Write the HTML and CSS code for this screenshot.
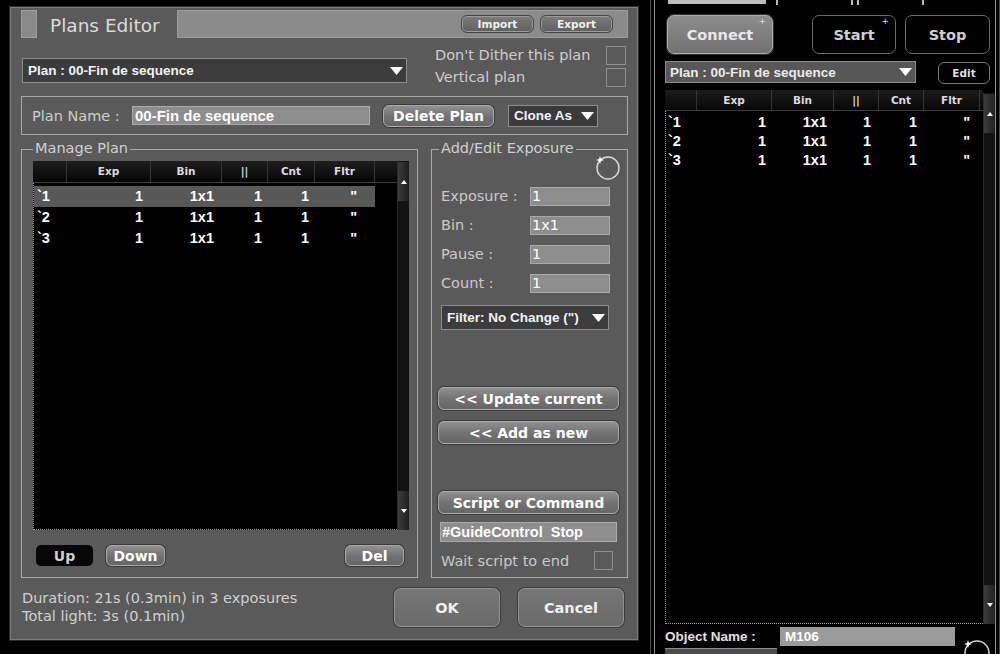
FILE: index.html
```html
<!DOCTYPE html>
<html>
<head>
<meta charset="utf-8">
<title>Plans Editor</title>
<link rel="stylesheet" href="styles.css">
</head>
<body>
<div class="dlg">
  <div class="titlerow">
    <div class="tsq"></div>
    <div class="ttl">Plans Editor</div>
    <div class="tbar">
      <button class="pill">Import</button>
      <button class="pill">Export</button>
    </div>
  </div>

  <div class="row2">
    <div class="combo plansel"><span>Plan : 00-Fin de sequence</span><svg class="arr" viewBox="0 0 13 8"><polygon points="0,0 13,0 6.5,8"/></svg></div>
    <div class="checks">
      <span class="clabel">Don't Dither this plan</span><span class="chk"></span>
      <span class="clabel">Vertical plan</span><span class="chk"></span>
    </div>
  </div>

  <div class="namebox">
    <span class="nlabel">Plan Name :</span>
    <div class="field namefield">00-Fin de sequence</div>
    <button class="btn delplan">Delete Plan</button>
    <div class="combo clone"><span>Clone As</span><svg class="arr" viewBox="0 0 13 8"><polygon points="0,0 13,0 6.5,8"/></svg></div>
  </div>

  <div class="groups">
    <div class="group manage">
      <span class="legend">Manage Plan</span>
      <div class="list">
        <div class="lmain">
          <div class="lhead">
            <span></span><span>Exp</span><span>Bin</span><span>||</span><span>Cnt</span><span>Fltr</span><span></span>
          </div>
          <div class="lbody">
            <div class="lrow sel"><span>`1</span><span>1</span><span>1x1</span><span>1</span><span>1</span><span>&quot;</span></div>
            <div class="lrow"><span>`2</span><span>1</span><span>1x1</span><span>1</span><span>1</span><span>&quot;</span></div>
            <div class="lrow"><span>`3</span><span>1</span><span>1x1</span><span>1</span><span>1</span><span>&quot;</span></div>
          </div>
        </div>
        <div class="sbar">
          <div class="sthumb"><svg viewBox="0 0 6 4"><polygon points="0,4 6,4 3,0"/></svg></div>
          <div class="sthumb"><svg viewBox="0 0 6 4"><polygon points="0,0 6,0 3,4"/></svg></div>
        </div>
      </div>
      <div class="mbtns">
        <button class="upbtn">Up</button>
        <button class="btn downbtn">Down</button>
        <button class="btn delbtn">Del</button>
      </div>
    </div>

    <div class="group addedit">
      <span class="legend">Add/Edit Exposure</span>
      <svg class="ring" viewBox="0 0 26 26">
        <circle cx="13" cy="13" r="11" fill="none" stroke="#d6d6d6" stroke-width="1.5"/>
        <path d="M5 1 L6 4 L9 5 L6 6 L5 9 L4 6 L1 5 L4 4 Z" fill="#fff"/>
      </svg>
      <div class="form">
        <span>Exposure :</span><div class="field inp">1</div>
        <span>Bin :</span><div class="field inp">1x1</div>
        <span>Pause :</span><div class="field inp">1</div>
        <span>Count :</span><div class="field inp">1</div>
      </div>
      <div class="combo filter"><span>Filter: No Change (&quot;)</span><svg class="arr" viewBox="0 0 13 8"><polygon points="0,0 13,0 6.5,8"/></svg></div>
      <button class="btn wide upd">&lt;&lt; Update current</button>
      <button class="btn wide addnew">&lt;&lt; Add as new</button>
      <button class="btn wide script">Script or Command</button>
      <div class="field guide">#GuideControl&nbsp; Stop</div>
      <div class="waitrow"><span>Wait script to end</span><span class="chk"></span></div>
    </div>
  </div>

  <div class="footer">
    <div class="ftext">Duration: 21s (0.3min) in 3 exposures<br>Total light: 3s (0.1min)</div>
    <button class="bigbtn okb">OK</button>
    <button class="bigbtn cancelb">Cancel</button>
  </div>
</div>

<div class="rp">
  <div class="topstrip">
    <span class="tsbar"></span><span class="tick t1"></span><span class="tick t2"></span><span class="tick t3"></span><span class="tick t4"></span>
  </div>
  <div class="rbtns">
    <button class="rbtn connect">Connect<span class="plus">+</span></button>
    <button class="rbtn dark start">Start<span class="plus">+</span></button>
    <button class="rbtn dark stop">Stop</button>
  </div>
  <div class="rplanrow">
    <div class="combo rplan"><span>Plan : 00-Fin de sequence</span><svg class="arr" viewBox="0 0 13 8"><polygon points="0,0 13,0 6.5,8"/></svg></div>
    <button class="editbtn">Edit</button>
  </div>
  <div class="rlist">
    <div class="rmain">
      <div class="rhead">
        <span></span><span>Exp</span><span>Bin</span><span>||</span><span>Cnt</span><span>Fltr</span><span></span>
      </div>
      <div class="rbody">
        <div class="rrow"><span>`1</span><span>1</span><span>1x1</span><span>1</span><span>1</span><span>&quot;</span></div>
        <div class="rrow"><span>`2</span><span>1</span><span>1x1</span><span>1</span><span>1</span><span>&quot;</span></div>
        <div class="rrow"><span>`3</span><span>1</span><span>1x1</span><span>1</span><span>1</span><span>&quot;</span></div>
      </div>
    </div>
    <div class="sbar rsbar">
      <div class="sthumb"><svg viewBox="0 0 6 4"><polygon points="0,4 6,4 3,0"/></svg></div>
      <div class="sthumb"><svg viewBox="0 0 6 4"><polygon points="0,0 6,0 3,4"/></svg></div>
    </div>
  </div>
  <div class="objrow">
    <span class="objlabel">Object Name :</span>
    <div class="objfield">M106</div>
    <svg class="ring rring" viewBox="0 0 28 28">
      <circle cx="14" cy="14" r="12" fill="none" stroke="#d6d6d6" stroke-width="1.5"/>
      <path d="M5 1 L6 4 L9 5 L6 6 L5 9 L4 6 L1 5 L4 4 Z" fill="#fff"/>
    </svg>
  </div>
  <div class="cutbar"></div>
</div>
</body>
</html>
```

FILE: styles.css
```css
* { box-sizing: border-box; }
html, body { margin: 0; padding: 0; }
body {
  background: #000;
  width: 1000px;
  height: 654px;
  overflow: hidden;
  display: flex;
  align-items: flex-start;
  font-family: "DejaVu Sans", Verdana, sans-serif;
  font-size: 14.5px;
  color: #d2d2d2;
}
button { font: inherit; color: inherit; padding: 0; margin: 0; }

/* ---------- dialog ---------- */
.dlg {
  margin: 7px 0 0 10px;
  width: 628px;
  height: 633px;
  border: 1px solid #7c7c7c;
  box-shadow: 0 0 0 1px #2b2b2b;
  background: #5a5a5a;
  padding: 2px 9px 0 10px;
}
.titlerow { display: flex; height: 28px; align-items: center; }
.tsq { width: 16px; height: 28px; background: #8a8a8a; border: 1px solid #9d9d9d; }
.ttl {
  width: 140px;
  height: 28px;
  padding: 3px 0 0 13px;
  font-size: 18.5px;
  line-height: 25px;
  color: #dadada;
  white-space: nowrap;
}
.tbar {
  flex: 1;
  height: 28px;
  background: #8b8b8b;
  border: 1px solid #9b9b9b;
  display: flex;
  justify-content: flex-end;
  align-items: center;
  gap: 6px;
  padding-right: 14px;
}
.pill {
  width: 73px;
  height: 18px;
  border-radius: 6px;
  background: linear-gradient(#7c7c7c, #5f5f5f);
  border: 1px solid #444;
  box-shadow: inset 0 0 0 1px #9c9c9c;
  color: #f0f0f0;
  font-weight: bold;
  font-size: 10.5px;
  line-height: 15px;
  text-align: center;
}

.row2 { display: flex; height: 58px; align-items: flex-start; }
.combo {
  display: flex;
  align-items: center;
  justify-content: space-between;
  background: #3c3c3c;
  border: 1px solid #8c8c8c;
  font-family: "Liberation Sans", Arial, sans-serif;
  font-weight: bold;
  font-size: 13.5px;
  color: #f2f2f2;
  white-space: nowrap;
}
.arr { width: 13px; height: 8px; fill: #fff; flex: none; }
.plansel { margin: 20px 0 0 1px; width: 385px; height: 25px; padding: 0 3px 0 5px; }
.checks {
  margin: 8px 2px 0 auto;
  display: grid;
  grid-template-columns: 171px 20px;
  row-gap: 3px;
  align-items: center;
}
.clabel { line-height: 19px; color: #cdcdcd; white-space: nowrap; }
.chk { display: block; width: 20px; height: 19px; border: 1px solid #8f8f8f; background: #5a5a5a; }

.namebox {
  height: 39px;
  border: 1px solid #a8a8a8;
  display: flex;
  align-items: center;
  padding-left: 10px;
}
.nlabel { width: 100px; color: #cdcdcd; white-space: nowrap; }
.field { background: #8d8d8d; border: 1px solid #a9a9a9; color: #fff; white-space: nowrap; }
.namefield {
  width: 238px;
  height: 19px;
  font-family: "Liberation Sans", Arial, sans-serif;
  font-weight: bold;
  font-size: 15px;
  line-height: 17px;
  padding-left: 2px;
}
.btn {
  border: 1px solid #ababab;
  border-radius: 6px;
  background: linear-gradient(#909090, #737373 50%, #666);
  box-shadow: 0 0 0 1px #3a3a3a;
  color: #fff;
  font-weight: bold;
  font-size: 14px;
  line-height: 1;
  text-align: center;
  white-space: nowrap;
}
.delplan { margin-left: 13px; width: 111px; height: 22px; }
.clone { margin-left: 14px; width: 90px; height: 22px; padding: 0 3px 0 5px; background: #3a3a3a; }

.groups { display: flex; gap: 13px; margin-top: 14px; }
.group {
  height: 429px;
  border: 1px solid #a8a8a8;
  display: flex;
  flex-direction: column;
}
.manage { width: 397px; }
.addedit { width: 197px; }
.legend {
  align-self: flex-start;
  margin: -10px 0 0 11px;
  padding: 0 2px;
  background: #5a5a5a;
  line-height: 17px;
  color: #d0d0d0;
  white-space: nowrap;
}
.addedit .legend { margin-left: 7px; }

.list { margin: 4px 0 0 11px; width: 376px; height: 369px; display: flex; background: #000; }
.lmain { width: 364px; display: flex; flex-direction: column; }
.lhead {
  display: grid;
  grid-template-columns: 34px 84px 71px 46px 47px 60px 22px;
  height: 22px;
  background: linear-gradient(#1e1e1e, #060606);
  border-bottom: 1px solid #3c3c3c;
}
.lhead span, .rhead span {
  border-right: 1px solid #343434;
  text-align: center;
  font-weight: bold;
  font-size: 10.5px;
  line-height: 21px;
  color: #dcdcdc;
}
.lhead span:last-child, .rhead span:last-child { border-right: none; }
.lbody {
  flex: 1;
  border-left: 1px dotted #a0a0a0;
  border-bottom: 1px dotted #a0a0a0;
  padding-top: 3px;
}
.lrow {
  display: grid;
  grid-template-columns: 33px 84px 71px 46px 47px 60px;
  width: 341px;
  height: 21px;
  font-family: "Liberation Sans", Arial, sans-serif;
  font-weight: bold;
  font-size: 14.5px;
  line-height: 21px;
  color: #fff;
}
.lrow.sel { background: #585858; }
.lrow span { text-align: right; }
.lrow span:nth-child(1) { text-align: left; padding-left: 3px; }
.lrow span:nth-child(2) { padding-right: 8px; }
.lrow span:nth-child(3) { padding-right: 8px; }
.lrow span:nth-child(4) { padding-right: 6px; }
.lrow span:nth-child(5) { padding-right: 6px; }
.lrow span:nth-child(6) { padding-right: 18px; }

.sbar {
  width: 12px;
  background: #121212;
  border-left: 1px solid #2c2c2c;
  display: flex;
  flex-direction: column;
  justify-content: space-between;
  padding-top: 1px;
}
.sthumb {
  height: 39px;
  background: linear-gradient(90deg, #3c3c3c, #1f1f1f);
  display: flex;
  align-items: center;
  justify-content: center;
}
.sthumb svg { width: 6px; height: 4px; fill: #fff; }

.mbtns { display: flex; align-items: center; margin: 15px 0 0 14px; padding-right: 13px; }
.upbtn {
  width: 57px;
  height: 21px;
  border: none;
  border-radius: 5px;
  background: #060606;
  color: #cfcfcf;
  font-weight: bold;
  font-size: 14px;
}
.downbtn { margin-left: 13px; width: 59px; height: 21px; }
.delbtn { margin-left: auto; width: 59px; height: 21px; }

.ring { align-self: flex-end; margin: -2px 6px 0 0; width: 26px; height: 26px; flex: none; }
.form {
  display: grid;
  grid-template-columns: 89px 80px;
  row-gap: 10px;
  margin: 6px 0 0 9px;
  align-items: center;
}
.form span { color: #c9c9c9; white-space: nowrap; line-height: 19px; }
.inp { height: 19px; line-height: 17px; padding-left: 1px; }
.filter { margin: 12px 0 0 9px; width: 168px; height: 25px; padding: 0 3px 0 5px; }
.wide { width: 181px; height: 23px; margin-left: 6px; }
.upd { margin-top: 57px; }
.addnew { margin-top: 11px; }
.script { margin-top: 47px; }
.guide {
  margin: 8px 0 0 8px;
  width: 177px;
  height: 20px;
  font-family: "Liberation Sans", Arial, sans-serif;
  font-weight: bold;
  font-size: 14.5px;
  line-height: 18px;
  padding-left: 1px;
}
.waitrow { display: flex; align-items: center; height: 19px; margin: 9px 14px 0 9px; color: #c9c9c9; }
.waitrow .chk { margin-left: auto; width: 19px; }

.footer { display: flex; align-items: flex-start; margin-top: 10px; }
.ftext { margin-left: 1px; padding-top: 1px; line-height: 18px; color: #d0d0d0; white-space: nowrap; }
.bigbtn {
  width: 106px;
  height: 39px;
  border: 1px solid #929292;
  border-radius: 7px;
  background: linear-gradient(#767676, #6a6a6a);
  box-shadow: 0 0 0 1px #3d3d3d;
  color: #f0f0f0;
  font-weight: bold;
  font-size: 14.5px;
}
.okb { margin-left: auto; }
.cancelb { margin-left: 18px; margin-right: 4px; }

/* ---------- right panel ---------- */
.rp {
  margin-left: 12px;
  width: 350px;
  height: 654px;
  background: #000;
  box-shadow: inset 1px 0 #4a4a4a, inset 4px 0 #000, inset 5px 0 #8f8f8f,
              inset -1px 0 #4a4a4a, inset -4px 0 #000, inset -5px 0 #8f8f8f;
  padding: 0 5px 0 15px;
  display: flex;
  flex-direction: column;
}
.topstrip { height: 5px; display: flex; align-items: flex-start; }
.tsbar { margin-left: 3px; width: 98px; height: 4px; background: #bdbdbd; }
.tick { width: 2px; height: 5px; background: #bbb; }
.t1 { margin-left: 10px; }
.t2 { margin-left: 73px; }
.t3 { margin-left: 4px; }
.t4 { margin-left: 63px; }

.rbtns { display: flex; margin-top: 10px; padding-left: 2px; }
.rbtn {
  position: relative;
  height: 39px;
  border-radius: 7px;
  font-weight: bold;
  font-size: 14.5px;
}
.connect {
  width: 106px;
  background: linear-gradient(#8c8c8c, #727272);
  border: 1px solid #adadad;
  box-shadow: 0 0 0 1px #333;
  color: #e8e8e8;
}
.dark { background: #000; border: 1px solid #6a6a6a; color: #cfcfcf; }
.start { margin-left: 39px; width: 84px; }
.stop { margin-left: 9px; width: 85px; }
.plus {
  position: absolute;
  top: 1px;
  right: 6px;
  font-size: 9px;
  font-weight: normal;
  line-height: 9px;
  color: #ddd;
}

.rplanrow { display: flex; align-items: flex-start; margin-top: 7px; }
.rplan { width: 251px; height: 22px; padding: 0 3px 0 4px; background: #575757; border-color: #8a8a8a; color: #eaeaea; }
.editbtn {
  margin: 1px 0 0 22px;
  width: 52px;
  height: 22px;
  background: #000;
  border: 1px solid #777;
  border-radius: 6px;
  color: #dedede;
  font-weight: bold;
  font-size: 10.5px;
}

.rlist { display: flex; margin-top: 6px; width: 330px; height: 536px; }
.rmain { width: 318px; display: flex; flex-direction: column; }
.rhead {
  display: grid;
  grid-template-columns: 32px 75px 62px 45px 45px 56px 3px;
  height: 21px;
  background: linear-gradient(#1c1c1c, #070707);
  border-bottom: 1px solid #3c3c3c;
}
.rhead span { line-height: 20px; }
.rbody {
  flex: 1;
  border-left: 1px dotted #a0a0a0;
  border-bottom: 1px dotted #a0a0a0;
  padding-top: 2px;
}
.rrow {
  display: grid;
  grid-template-columns: 31px 75px 62px 45px 45px 56px;
  height: 19px;
  font-family: "Liberation Sans", Arial, sans-serif;
  font-weight: bold;
  font-size: 14.5px;
  line-height: 19px;
  color: #fff;
}
.rrow span { text-align: right; }
.rrow span:nth-child(1) { text-align: left; padding-left: 2px; }
.rrow span:nth-child(2) { padding-right: 6px; }
.rrow span:nth-child(3) { padding-right: 7px; }
.rrow span:nth-child(4) { padding-right: 8px; }
.rrow span:nth-child(5) { padding-right: 7px; }
.rrow span:nth-child(6) { padding-right: 10px; }
.rsbar { margin-top: 3px; }

.objrow { display: flex; height: 19px; margin-top: 3px; }
.objlabel {
  width: 115px;
  font-family: "Liberation Sans", Arial, sans-serif;
  font-weight: bold;
  font-size: 13.5px;
  line-height: 19px;
  color: #e0e0e0;
  white-space: nowrap;
}
.objfield {
  width: 175px;
  height: 19px;
  background: #9b9b9b;
  font-family: "Liberation Sans", Arial, sans-serif;
  font-weight: bold;
  font-size: 13.5px;
  line-height: 19px;
  padding-left: 5px;
  color: #fff;
}
.rring { align-self: flex-start; margin: 12px 0 0 8px; width: 28px; height: 28px; }
.cutbar { margin-top: 2px; width: 112px; height: 6px; background: #4b4b4b; border-top: 1px solid #8a8a8a; }
```
